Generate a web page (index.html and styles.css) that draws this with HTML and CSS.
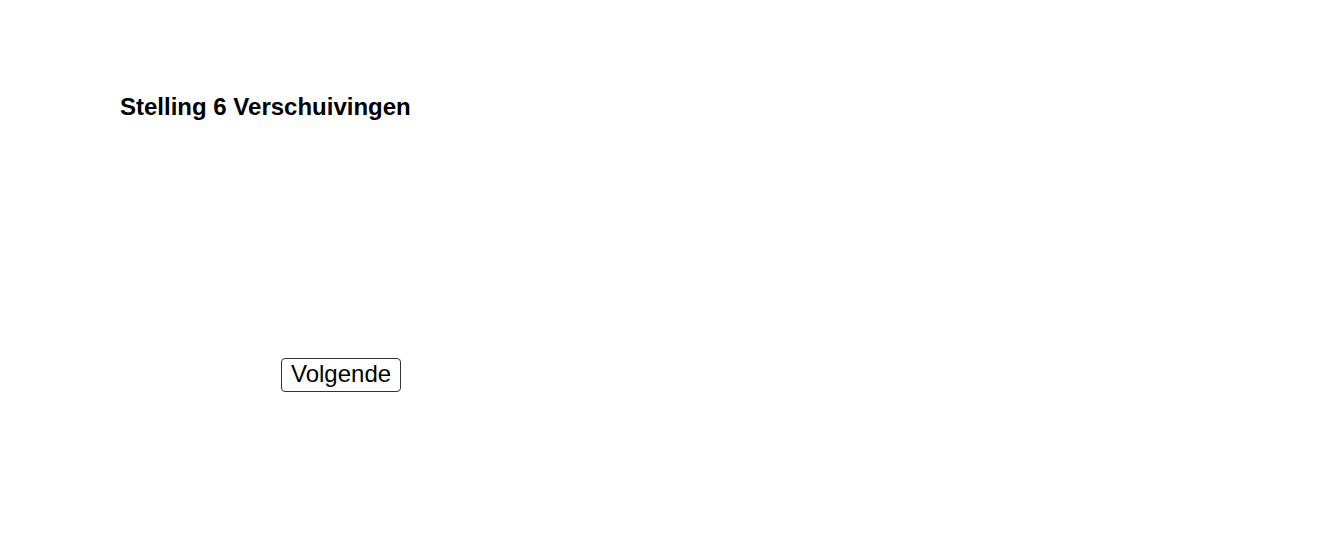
FILE: index.html
```html
<!DOCTYPE html>
<html>
<head>
    <link rel="stylesheet" href="styles.css">
    <title>Stelling 6</title>
</head>
<body>
    <div class="page">
        <h1 class="title">Stelling 6 Verschuivingen</h1>
        <div class="controls">
            <button class="next-button">Volgende</button>
        </div>
    </div>
</body>
</html>
```

FILE: styles.css
```css
* {
    box-sizing: border-box;
}

body {
    margin: 0;
    padding: 0;
    background-color: #ffffff;
    font-family: "Liberation Sans", Arial, sans-serif;
    color: #000000;
}

.page {
    padding: 93px 0 0 120px;
}

.title {
    margin: 0;
    font-size: 24px;
    font-weight: bold;
    line-height: 27px;
}

.controls {
    padding: 238px 0 0 161px;
}

.next-button {
    font-family: "Liberation Sans", Arial, sans-serif;
    font-size: 24px;
    line-height: 28px;
    height: 34px;
    padding: 1px 9px 3px;
    background-color: #ffffff;
    color: #000000;
    border: 1px solid #333333;
    border-radius: 4px;
}
```
